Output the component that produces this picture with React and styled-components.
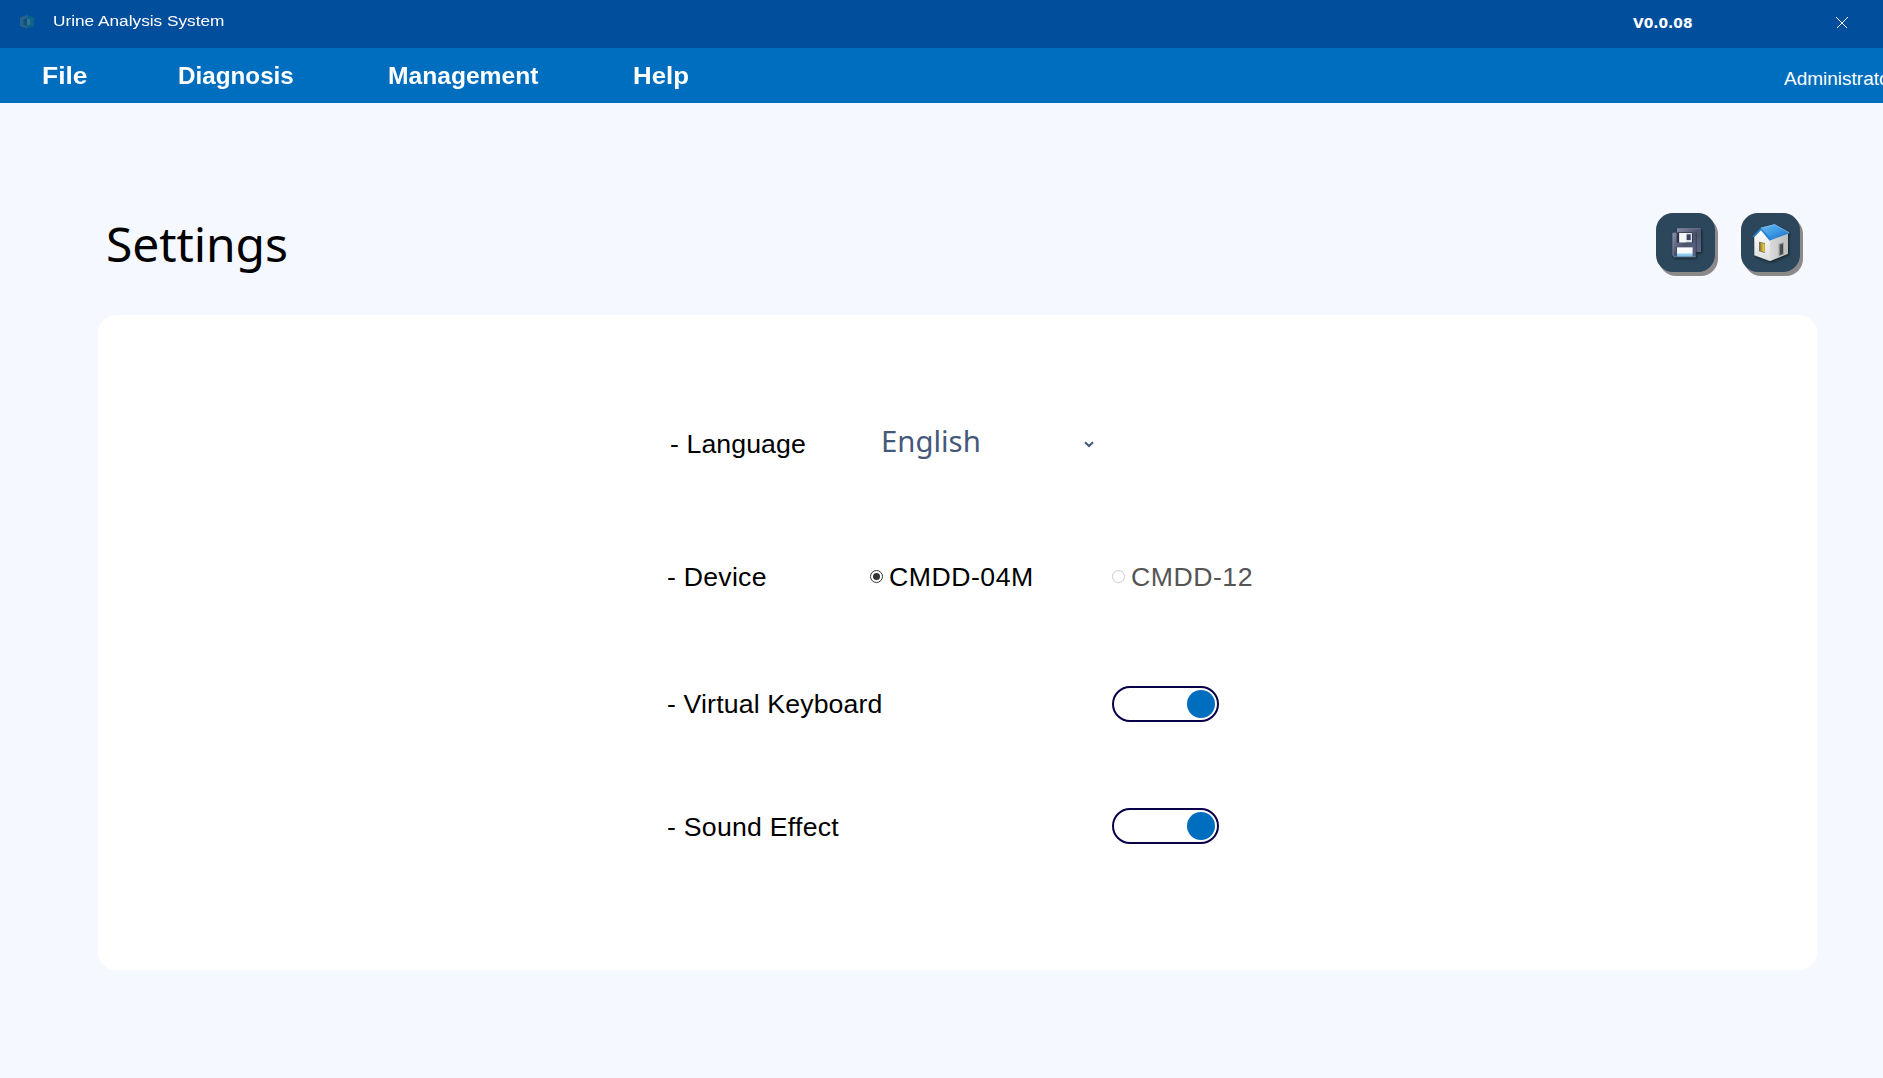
import React, { useState } from "react";
import styled, { createGlobalStyle } from "styled-components";

const GlobalStyle = createGlobalStyle`
  * { box-sizing: border-box; }
  html, body { margin: 0; height: 100%; overflow: hidden; }
  body { background: #f5f8ff; font-family: "Liberation Sans", Arial, sans-serif; color: #000; }
  button { border: 0; padding: 0; background: none; font: inherit; color: inherit; }
`;

const Window = styled.div`
  width: 100%;
  height: 1078px;
  display: flex;
  flex-direction: column;
  overflow: hidden;
  background: #f5f8ff;
`;

const TitleBar = styled.header`
  display: flex;
  height: 48px;
  flex: none;
  padding-left: 19px;
  background: #004e9c;
  color: #fff;
`;

const Logo = styled.svg`
  width: 16px;
  height: 14px;
  margin-top: 15px;
`;

const AppName = styled.div`
  margin: 12px auto 0 18px;
  font-size: 15.5px;
  line-height: 18px;
  white-space: nowrap;
  transform: scaleX(1.112);
  transform-origin: left;
`;

const Version = styled.div`
  width: 203px;
  margin-top: 14px;
  font: bold 13.8px/18px "DejaVu Sans", sans-serif;
`;

const CloseButton = styled.button`
  display: flex;
  width: 47px;
  height: 48px;
  padding-top: 17px;
`;

const NavBar = styled.nav`
  display: flex;
  height: 55px;
  flex: none;
  padding-left: 41.5px;
  background: #006ebf;
  color: #fff;
`;

const NavItem = styled.a`
  width: ${(p) => p.$width}px;
  flex: none;
  padding-top: 14px;
  font-size: 24px;
  font-weight: bold;
  line-height: 28px;
  transform: scaleX(${(p) => p.$stretch});
  transform-origin: left;
`;

const UserName = styled.div`
  width: 99px;
  flex: none;
  margin-left: auto;
  padding-top: 20px;
  font-size: 19px;
  line-height: 22px;
  white-space: nowrap;
  overflow: hidden;
`;

const PageHeader = styled.div`
  display: flex;
  height: 212px;
  flex: none;
  padding: 110px 83px 0 106px;
`;

const Title = styled.h1`
  margin: 1px auto 0 0;
  font: 400 48px/60px "Noto Sans", sans-serif;
  letter-spacing: -0.1px;
`;

const Actions = styled.div`
  display: flex;
  gap: 26px;
`;

const ActionButton = styled.button`
  display: block;
  width: 59px;
  height: 59px;
  border-radius: 17px;
  background: #2c465b;
  box-shadow: 3px 4px 0 #8b898a;

  svg { display: block; }
`;

const Card = styled.main`
  width: 1719px;
  height: 655px;
  flex: none;
  margin-left: 98px;
  padding: 111px 0 0 569px;
  border-radius: 18px;
  background: #fff;
`;

const Row = styled.div`
  display: flex;
  align-items: center;
  height: 36px;
  margin-bottom: ${(p) => p.$after}px;
  padding-left: ${(p) => p.$indent || 0}px;
  font-size: 26.67px;
  line-height: 30px;
  white-space: nowrap;
`;

const Label = styled.div`
  width: ${(p) => p.$width}px;
  flex: none;
  padding-top: ${(p) => p.$drop || 0}px;
  letter-spacing: ${(p) => p.$spacing}px;
`;

const Select = styled.button`
  display: flex;
  align-items: center;
  justify-content: space-between;
  width: 213px;
  color: #44587a;
`;

const SelectValue = styled.span`
  margin-top: -6px;
  font: 29.33px/36px "Noto Sans", sans-serif;
`;

const Option = styled.label`
  display: flex;
  align-items: center;
  gap: 6px;
  width: 242px;
  letter-spacing: 0.5px;
  color: ${(p) => (p.$disabled ? "#555" : "#000")};
`;

const Radio = styled.span`
  display: grid;
  place-items: center;
  width: 13px;
  height: 13px;
  margin-bottom: 1px;
  border: 1px solid ${(p) => (p.$disabled ? "#ccc" : "#333")};
  border-radius: 50%;

  &::after {
    content: "";
    width: 7px;
    height: 7px;
    border-radius: 50%;
    background: ${(p) => (p.$checked ? "#333" : "transparent")};
  }
`;

const Toggle = styled.button`
  display: flex;
  align-items: center;
  justify-content: ${(p) => (p.$on ? "flex-end" : "flex-start")};
  width: 107px;
  height: 36px;
  padding: 0 2px;
  border: 2px solid #080048;
  border-radius: 18px;
  background: #fff;
`;

const Knob = styled.span`
  width: 28px;
  height: 28px;
  border-radius: 50%;
  background: #006ebf;
`;

function SaveIcon() {
  return (
    <svg width="59" height="59" viewBox="48 39 177 177">
      <defs>
        <linearGradient id="disk" x1="0" y1="0" x2="1" y2="1">
          <stop offset="0" stopColor="#8790a8" />
          <stop offset=".5" stopColor="#4c536d" />
          <stop offset="1" stopColor="#5b6786" />
        </linearGradient>
        <linearGradient id="paper" x1="0" y1="0" x2="0" y2="1">
          <stop offset="0" stopColor="#fff" />
          <stop offset=".6" stopColor="#f2f8fb" />
          <stop offset=".72" stopColor="#9ed2ef" />
          <stop offset="1" stopColor="#6fb8e6" />
        </linearGradient>
        <filter id="diskShade" x="-20%" y="-20%" width="150%" height="150%">
          <feDropShadow dx="3" dy="4" stdDeviation="3" floodColor="#08131f" floodOpacity=".8" />
        </filter>
      </defs>
      <g filter="url(#diskShade)">
        <path d="M111 85H183V156H111Z" fill="url(#disk)" />
        <path d="M112 86H182" stroke="#7d859b" strokeWidth="2" />
        <path d="M168 98V156" stroke="#343b53" strokeWidth="4" />
        <path d="M98 98H167V171H103L98 166Z" fill="url(#disk)" />
        <path d="M99 99V165L103 170H166" fill="none" stroke="#8993ad" strokeWidth="2" />
      </g>
      <path d="M110 97H158V128H110Z" fill="#2d3347" />
      <path d="M118 99H156V127H118Z" fill="#dce4e9" />
      <path d="M118 99H138V127H118Z" fill="#f3f7f8" />
      <path d="M140 103H152V120H140Z" fill="#3a4561" />
      <path d="M109 141H159V170H109Z" fill="#3f4865" />
      <path d="M111 142H158V170H111Z" fill="url(#paper)" />
    </svg>
  );
}

function HomeIcon() {
  return (
    <svg width="59" height="59" viewBox="48 39 177 177">
      <defs>
        <linearGradient id="roof" x1="0" y1="0" x2="1" y2="1">
          <stop offset="0" stopColor="#6bb9f1" />
          <stop offset=".5" stopColor="#3d98e2" />
          <stop offset="1" stopColor="#1767bd" />
        </linearGradient>
        <linearGradient id="front" x1="0" y1="0" x2="0" y2="1">
          <stop offset="0" stopColor="#fff" />
          <stop offset="1" stopColor="#dedede" />
        </linearGradient>
        <linearGradient id="side" x1="0" y1="0" x2="1" y2="0">
          <stop offset="0" stopColor="#dcdcdc" />
          <stop offset="1" stopColor="#bcbcbc" />
        </linearGradient>
        <linearGradient id="lamp" x1="0" y1="0" x2="1" y2="0">
          <stop offset="0" stopColor="#a08a2a" />
          <stop offset="1" stopColor="#f6d548" />
        </linearGradient>
        <filter id="houseShade" x="-20%" y="-20%" width="150%" height="150%">
          <feDropShadow dx="3" dy="4" stdDeviation="3" floodColor="#08131f" floodOpacity=".8" />
        </filter>
      </defs>
      <g filter="url(#houseShade)">
        <path d="M88 109L107 88L135 121V183L88 166Z" fill="url(#front)" />
        <path d="M134 119L189 100V161L135 183Z" fill="url(#side)" />
        <path d="M107 84L149 73L194 99L137 121Z" fill="url(#roof)" />
        <path d="M107 83L82 110L88 112L108 91L134 122L139 118Z" fill="#2a80d2" />
      </g>
      <path d="M108 84L149 74L192 98" fill="none" stroke="#8acaf5" strokeWidth="2" />
      <path d="M102 125L120 129V159L102 154Z" fill="#77705a" />
      <path d="M106 128L119 131V157L106 152Z" fill="url(#lamp)" />
      <path d="M161 132L176 127V163L161 169Z" fill="#8a8c8e" />
      <path d="M165 134L174 131V161L165 165Z" fill="#4b4e51" />
    </svg>
  );
}

const MENU = [
  { label: "File", width: 136, stretch: 1.1 },
  { label: "Diagnosis", width: 210, stretch: 1.01 },
  { label: "Management", width: 245, stretch: 1.025 },
  { label: "Help", width: 100, stretch: 1.075 },
];

export default function App() {
  const [keyboard, setKeyboard] = useState(true);
  const [sound, setSound] = useState(true);

  return (
    <>
      <GlobalStyle />
      <Window>
        <TitleBar>
          <Logo viewBox="0 0 16 14">
            <path d="M8 0L1 2.5V11L8 13.5Z" fill="#2c618b" />
            <path d="M8 0L15 2.5V11L8 13.5Z" fill="#086488" />
            <path d="M8 3L4.5 4.5V9.5L8 11Z" fill="#075283" />
            <path d="M8 3.5L11.5 4.5V9.5L8 10.5Z" fill="#34758b" />
          </Logo>
          <AppName>Urine Analysis System</AppName>
          <Version>V0.0.08</Version>
          <CloseButton aria-label="Close">
            <svg width="12" height="12" viewBox="0 0 12 12" shapeRendering="crispEdges">
              <path d="M.5 .5L11.5 11.5M11.5 .5L.5 11.5" stroke="#fff" strokeWidth="1" />
            </svg>
          </CloseButton>
        </TitleBar>
        <NavBar>
          {MENU.map((m) => (
            <NavItem key={m.label} $width={m.width} $stretch={m.stretch}>{m.label}</NavItem>
          ))}
          <UserName>Administrator</UserName>
        </NavBar>
        <PageHeader>
          <Title>Settings</Title>
          <Actions>
            <ActionButton aria-label="Save"><SaveIcon /></ActionButton>
            <ActionButton aria-label="Home"><HomeIcon /></ActionButton>
          </Actions>
        </PageHeader>
        <Card>
          <Row $after={96.5} $indent={3}>
            <Label $width={211} $spacing={0.1}>- Language</Label>
            <Select>
              <SelectValue>English</SelectValue>
              <svg width="10" height="7" viewBox="0 0 10 7">
                <path d="M1 1.2L5 5L9 1.2" fill="none" stroke="#44587a" strokeWidth="2" />
              </svg>
            </Select>
          </Row>
          <Row $after={91.5}>
            <Label $width={203} $spacing={0.25}>- Device</Label>
            <Option><Radio $checked />CMDD-04M</Option>
            <Option $disabled><Radio $disabled />CMDD-12</Option>
          </Row>
          <Row $after={86}>
            <Label $width={445} $spacing={0.15}>- Virtual Keyboard</Label>
            <Toggle $on={keyboard} onClick={() => setKeyboard(!keyboard)} aria-label="Virtual Keyboard"><Knob /></Toggle>
          </Row>
          <Row $after={0}>
            <Label $width={445} $spacing={0.25} $drop={2}>- Sound Effect</Label>
            <Toggle $on={sound} onClick={() => setSound(!sound)} aria-label="Sound Effect"><Knob /></Toggle>
          </Row>
        </Card>
      </Window>
    </>
  );
}
